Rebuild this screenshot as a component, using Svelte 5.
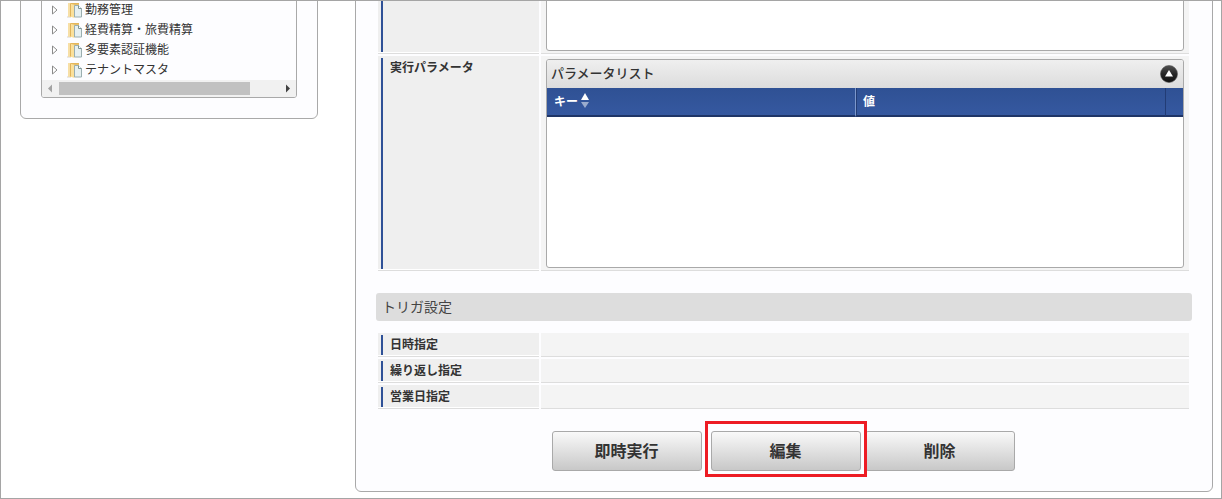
<script lang="ts">
  let folders = ["勤務管理", "経費精算・旅費精算", "多要素認証機能", "テナントマスタ"];
  let triggers = ["日時指定", "繰り返し指定", "営業日指定"];
  let thumb = 87;
</script>

<div class="page">
  <aside class="sidebar">
    <div class="tree">
      <ul>
        {#each folders as name}
          <li>
            <button class="toggle" aria-label="{name}を開く">
              <svg width="6" height="10" viewBox="0 0 6 10">
                <path d="M.5 1v8L5 5z" fill="#fff" stroke="#8b8b8b" />
              </svg>
            </button>
            <svg width="16" height="16" viewBox="0 0 16 16">
              <path d="M0 14.500h4v1H0z" fill="#d8d4cb" />
              <path d="M1 1h11v13.500H1z" fill="#f0cd7c" />
              <path d="M1 1h2v13.500H1z" fill="#f7dfa6" />
              <path d="M3 1h9v1.500H3z" fill="#e3b65c" />
              <path d="M3 1.500 7.500 3v13L3 14.500z" fill="#fbe09a" />
              <path d="M3.500 2v12.500" stroke="#e0b45c" />
              <path d="M7.500 3.500h4l3 3v8.500h-7z" fill="#e6f0f1" stroke="#9aaeb0" />
              <path d="M11.500 3.500v3h3" fill="#fff" stroke="#7d9494" />
            </svg>
            <a href="#folder">{name}</a>
          </li>
        {/each}
      </ul>
      <div class="scrollbar">
        <svg width="17" height="17" viewBox="0 0 17 17"><path d="M10 4.5v8L6 8.5z" fill="#a3a3a3" /></svg>
        <div class="track"><div class="thumb" style="width: {thumb}%"></div></div>
        <svg width="17" height="17" viewBox="0 0 17 17"><path d="M7 4.5v8l4-4z" fill="#404040" /></svg>
      </div>
    </div>
  </aside>

  <main class="panel">
    <table class="form">
      <tbody>
        <tr>
          <th scope="row"></th>
          <td><div class="box short"></div></td>
        </tr>
        <tr>
          <th scope="row">実行パラメータ</th>
          <td>
            <div class="box list">
              <div class="caption">
                <span>パラメータリスト</span>
                <button class="collapse" aria-label="閉じる">
                  <svg width="18" height="18" viewBox="0 0 18 18">
                    <defs>
                      <linearGradient id="disc" x1="0" y1="0" x2="0" y2="1">
                        <stop offset="0" stop-color="#505050" />
                        <stop offset=".5" stop-color="#262626" />
                        <stop offset="1" stop-color="#101010" />
                      </linearGradient>
                    </defs>
                    <circle cx="9" cy="9" r="8.5" fill="url(#disc)" stroke="#555" stroke-width=".6" />
                    <path d="M9 5l4 6.500H5z" fill="#fff" />
                  </svg>
                </button>
              </div>
              <table class="grid">
                <thead>
                  <tr>
                    <th scope="col">
                      <button class="sort">
                        キー
                        <svg width="8" height="16" viewBox="0 0 8 16">
                          <path d="M4 0l4 7H0z" fill="#fff" />
                          <path d="M4 15L0 9h8z" fill="#9baccd" />
                        </svg>
                      </button>
                    </th>
                    <th scope="col">値</th>
                    <td class="end"></td>
                  </tr>
                </thead>
              </table>
            </div>
          </td>
        </tr>
      </tbody>
    </table>

    <h2>トリガ設定</h2>

    <table class="form">
      <tbody>
        {#each triggers as label}
          <tr>
            <th scope="row">{label}</th>
            <td></td>
          </tr>
        {/each}
      </tbody>
    </table>

    <div class="actions">
      <button>即時実行</button>
      <div class="marked"><button>編集</button></div>
      <button>削除</button>
    </div>
  </main>
</div>

<style>
  :global(body) {
    background: #fff;
  }

  .page {
    box-sizing: border-box;
    min-height: 100vh;
    padding: 0 8px 6px 19px;
    border: 1px solid #a5a5a5;
    overflow: hidden;
    display: flex;
    align-items: flex-start;
    gap: 37px;
    color: #333;
    font-family: "Noto Sans CJK JP", sans-serif;
    font-size: 12px;
    line-height: 20px;
  }

  button {
    padding: 0;
    border: 0;
    background: none;
    color: inherit;
    font: inherit;
    cursor: pointer;
  }

  svg {
    display: block;
    flex: none;
  }

  /* both columns are scrolled a little past their top edge */
  .sidebar,
  .panel {
    box-sizing: border-box;
    margin-top: -25px;
    border: 1px solid #a9a9a9;
    border-radius: 6px;
    background: #fdfdff;
  }

  .sidebar {
    flex: none;
    width: 298px;
    padding: 0 20px 20px;
  }

  .tree {
    border: 1px solid #a9a9a9;
    border-radius: 3px;
    overflow: hidden;
  }

  ul {
    margin: 0;
    padding: 22px 0 0;
    list-style: none;
  }

  li {
    display: flex;
    align-items: center;
    height: 20px;
    padding-left: 10px;
  }

  .toggle {
    margin-right: 9px;
  }

  li a {
    margin-left: 2px;
    padding-bottom: 2px;
    color: inherit;
    line-height: 18px;
    text-decoration: none;
  }

  .scrollbar {
    display: flex;
    height: 17px;
    background: #f1f1f1;
  }

  .track {
    flex: 1;
    padding: 2px 0;
  }

  .thumb {
    height: 13px;
    background: #c1c1c1;
  }

  .panel {
    flex: 1;
    min-width: 0;
    padding: 0 20px 20px;
  }

  .form {
    width: calc(100% - 1px);
    border-spacing: 2px;
    table-layout: fixed;
  }

  .form > tbody > tr > th {
    box-sizing: border-box;
    width: 161px;
    padding: 2px 0 4px 12px;
    border-bottom: 1px solid #ddd;
    background: linear-gradient(#2f5197, #2f5197) 3px 2px / 2px calc(100% - 3px) no-repeat #efefef;
    box-shadow: inset 0 -1px #fff;
    font-weight: 700;
    line-height: 17px;
    text-align: left;
    vertical-align: top;
  }

  .form > tbody > tr > td {
    padding: 3px 5px 2px;
    border-bottom: 1px solid #ddd;
    background: #f4f4f4;
  }

  .box {
    box-sizing: border-box;
    border: 1px solid #a9a9a9;
    border-radius: 3px;
    background: #fff;
    overflow: hidden;
  }

  .short {
    height: 69px;
  }

  .list {
    height: 209px;
  }

  .caption {
    box-sizing: border-box;
    display: flex;
    align-items: center;
    justify-content: space-between;
    height: 28px;
    padding: 0 5px 0 4px;
    background: linear-gradient(#efefef, #dcdcdc);
    font-size: 13px;
    font-weight: 500;
  }

  .caption span {
    padding-bottom: 2px;
  }

  .grid {
    width: 100%;
    border-spacing: 0;
    table-layout: fixed;
    background: linear-gradient(#2f5194, #3659a1);
    color: #fff;
  }

  .grid th {
    height: 25px;
    padding: 0 0 2px 7px;
    border-bottom: 2px solid #1f3567;
    font-weight: 700;
    text-align: left;
  }

  .grid th:first-child {
    border-right: 1px solid #7d98cc;
  }

  .grid th + th {
    border-left: 1px solid #223c75;
    padding-left: 6px;
  }

  .grid .end {
    width: 17px;
    padding: 0;
    border-left: 1px solid #223c75;
    border-bottom: 2px solid #1f3567;
  }

  .sort {
    display: flex;
    align-items: center;
    gap: 3px;
  }

  h2 {
    margin: 20px 0 10px;
    padding: 0 6px 2px;
    border-radius: 3px;
    background: #ddd;
    color: #444;
    font-size: 14px;
    font-weight: 400;
    line-height: 26px;
  }

  .actions {
    display: flex;
    justify-content: center;
    gap: 4px;
    margin: 20px 2px 0 0;
  }

  .actions button {
    display: block;
    width: 150px;
    height: 40px;
    padding-bottom: 2px;
    border: 1px solid #a9a9a9;
    border-radius: 3px;
    background: linear-gradient(#f9f9f9, #c8c8c8);
    font-size: 16px;
    font-weight: 700;
  }

  .marked {
    position: relative;
    margin-left: 5px;
  }

  .marked::after {
    content: "";
    position: absolute;
    inset: -10px -6px -6px;
    border: 3px solid #ed1c24;
    pointer-events: none;
  }
</style>
